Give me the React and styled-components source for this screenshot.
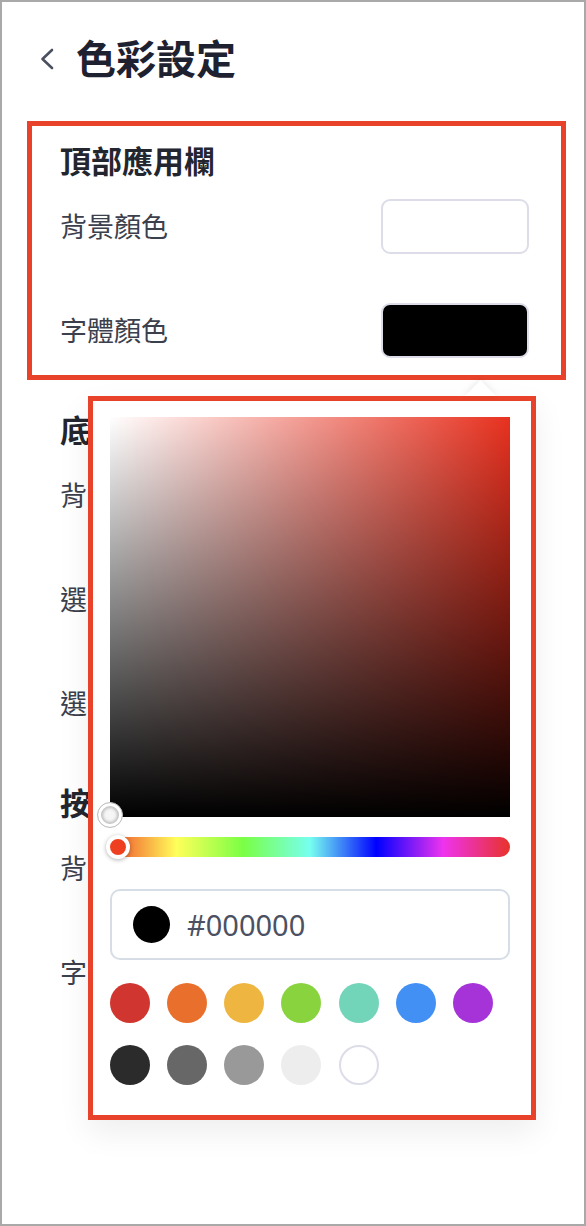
import React from 'react';
import styled, { createGlobalStyle } from 'styled-components';

const GlobalStyle = createGlobalStyle`
  html, body {
    margin: 0;
    padding: 0;
    background: #fff;
  }
  * {
    box-sizing: border-box;
  }
`;

const sections = [
  {
    id: 'top',
    title: '頂部應用欄',
    highlighted: true,
    rows: [
      { label: '背景顏色', color: '#ffffff' },
      { label: '字體顏色', color: '#000000' },
    ],
  },
  {
    id: 'bottom',
    title: '底部導航欄',
    rows: [
      { label: '背景顏色', color: '#ffffff' },
      { label: '選中圖示顏色', color: '#3b82f6' },
      { label: '選中文字顏色', color: '#3b82f6' },
    ],
  },
  {
    id: 'button',
    title: '按鈕',
    rows: [
      { label: '背景顏色', color: '#3b82f6' },
      { label: '字體顏色', color: '#ffffff' },
    ],
  },
];

const presets = [
  '#d0362f',
  '#e9702c',
  '#eeb640',
  '#89d43e',
  '#72d4b8',
  '#4290f3',
  '#a633d7',
  '#2b2b2b',
  '#676767',
  '#999999',
  '#ededed',
  '#ffffff',
];

const Frame = styled.div`
  position: relative;
  width: 586px;
  height: 1226px;
  border: 2px solid #a9a9a9;
  overflow: hidden;
  background: #fff;
  font-family: 'Noto Sans', 'Noto Sans CJK TC', sans-serif;
`;

// HEADER
const Header = styled.div`
  display: flex;
  align-items: center;
  gap: 21px;
  height: 60px;
  margin-top: 27px;
  padding-left: 37px;
`;

const BackButton = styled.button`
  display: flex;
  align-items: center;
  padding: 0;
  border: none;
  background: none;
  color: #4a5060;
`;

const Title = styled.h1`
  margin: 0;
  font-size: 40px;
  font-weight: 700;
  line-height: 60px;
  color: #1e2130;
`;

// SETTINGS LIST
const SectionList = styled.div`
  display: flex;
  flex-direction: column;
  gap: 10px;
  margin: 32px 18px 0 25px;
`;

const Section = styled.section`
  border: 5px solid ${({ $highlighted }) => ($highlighted ? '#e8432a' : 'transparent')};
  padding: 15px 32px 17px 28px;
`;

const SectionTitle = styled.h2`
  margin: 0 0 18px;
  font-size: 31px;
  font-weight: 700;
  line-height: 40px;
  color: #23262f;
`;

const Rows = styled.div`
  display: flex;
  flex-direction: column;
  gap: 49px;
`;

const Row = styled.div`
  display: flex;
  align-items: center;
  justify-content: space-between;
  height: 55px;
`;

const Label = styled.span`
  font-size: 27px;
  line-height: 36px;
  color: #3c404c;
`;

const Swatch = styled.div`
  width: 148px;
  height: 55px;
  border: 2px solid #dcdde8;
  border-radius: 9px;
  background: ${({ $color }) => $color};
`;

// COLOR PICKER POPOVER
const Popover = styled.div`
  position: absolute;
  top: 394px;
  left: 86px;
  width: 448px;
  height: 724px;
  display: flex;
  flex-direction: column;
  padding: 16px 21px 0 17px;
  border: 5px solid #e8432a;
  background: #fff;
  box-shadow: 0 12px 30px rgba(0, 0, 0, 0.07);
`;

const ArrowWrap = styled.div`
  position: absolute;
  top: -21px;
  left: 372px;
  filter: drop-shadow(0 -1px 3px rgba(0, 0, 0, 0.09));
`;

const Arrow = styled.div`
  width: 31px;
  height: 16px;
  background: #fff;
  clip-path: polygon(50% 0, 100% 100%, 0 100%);
`;

const Saturation = styled.div`
  position: relative;
  flex-shrink: 0;
  width: 400px;
  height: 400px;
  background: linear-gradient(to top, #000, rgba(0, 0, 0, 0)),
    linear-gradient(to right, #fff, ${({ $hue }) => $hue});
`;

const SatThumb = styled.div`
  position: absolute;
  left: -13px;
  top: 385px;
  width: 26px;
  height: 26px;
  border-radius: 50%;
  border: 1.5px solid #bdbdbd;
  background: #f6f6f6;
  box-shadow: inset 0 0 0 3px #fff, inset 0 0 3px 5px rgba(0, 0, 0, 0.22);
`;

const HueBar = styled.div`
  position: relative;
  flex-shrink: 0;
  width: 400px;
  height: 20px;
  margin-top: 20px;
  border-radius: 10px;
  background: linear-gradient(
    to right,
    #ef4a2a 0%,
    #ffff5a 16.6%,
    #7aff45 33.3%,
    #77fff0 50%,
    #0000ff 66.6%,
    #ee33ee 83.3%,
    #e8322a 100%
  );
`;

const HueThumb = styled.div`
  position: absolute;
  left: -4px;
  top: -2px;
  width: 24px;
  height: 24px;
  border-radius: 50%;
  border: 4px solid #fff;
  background: #ee4020;
  box-shadow: 0 1px 4px rgba(0, 0, 0, 0.3);
`;

const HexField = styled.div`
  display: flex;
  align-items: center;
  gap: 17px;
  width: 400px;
  height: 71px;
  margin-top: 32px;
  padding: 0 21px;
  border: 2px solid #d6dde6;
  border-radius: 10px;
`;

const HexDot = styled.span`
  width: 37px;
  height: 37px;
  border-radius: 50%;
  background: ${({ $color }) => $color};
`;

const HexText = styled.span`
  font-size: 29px;
  color: #4b5162;
`;

const PresetGrid = styled.div`
  display: grid;
  grid-template-columns: repeat(7, 40px);
  column-gap: 17.17px;
  row-gap: 22px;
  margin-top: 23px;
`;

const PresetDot = styled.button`
  width: 40px;
  height: 40px;
  padding: 0;
  border-radius: 50%;
  border: ${({ $color }) => ($color === '#ffffff' ? '2px solid #dcdde8' : 'none')};
  background: ${({ $color }) => $color};
`;

const ChevronLeft = () => (
  <svg width="16" height="24" viewBox="0 0 16 24" fill="none">
    <polyline
      points="13,3 3.5,12 13,21"
      stroke="currentColor"
      strokeWidth="2.6"
      strokeLinecap="round"
      strokeLinejoin="round"
    />
  </svg>
);

const App = () => {
  const hue = '#e8311f';
  const value = '#000000';

  return (
    <>
      <GlobalStyle />
      <Frame>
        <Header>
          <BackButton>
            <ChevronLeft />
          </BackButton>
          <Title>色彩設定</Title>
        </Header>

        <SectionList>
          {sections.map((section) => (
            <Section key={section.id} $highlighted={section.highlighted}>
              <SectionTitle>{section.title}</SectionTitle>
              <Rows>
                {section.rows.map((row) => (
                  <Row key={row.label}>
                    <Label>{row.label}</Label>
                    <Swatch $color={row.color} />
                  </Row>
                ))}
              </Rows>
            </Section>
          ))}
        </SectionList>

        <Popover>
          <ArrowWrap>
            <Arrow />
          </ArrowWrap>
          <Saturation $hue={hue}>
            <SatThumb />
          </Saturation>
          <HueBar>
            <HueThumb />
          </HueBar>
          <HexField>
            <HexDot $color={value} />
            <HexText>{value}</HexText>
          </HexField>
          <PresetGrid>
            {presets.map((color) => (
              <PresetDot key={color} $color={color} />
            ))}
          </PresetGrid>
        </Popover>
      </Frame>
    </>
  );
};

export default App;
